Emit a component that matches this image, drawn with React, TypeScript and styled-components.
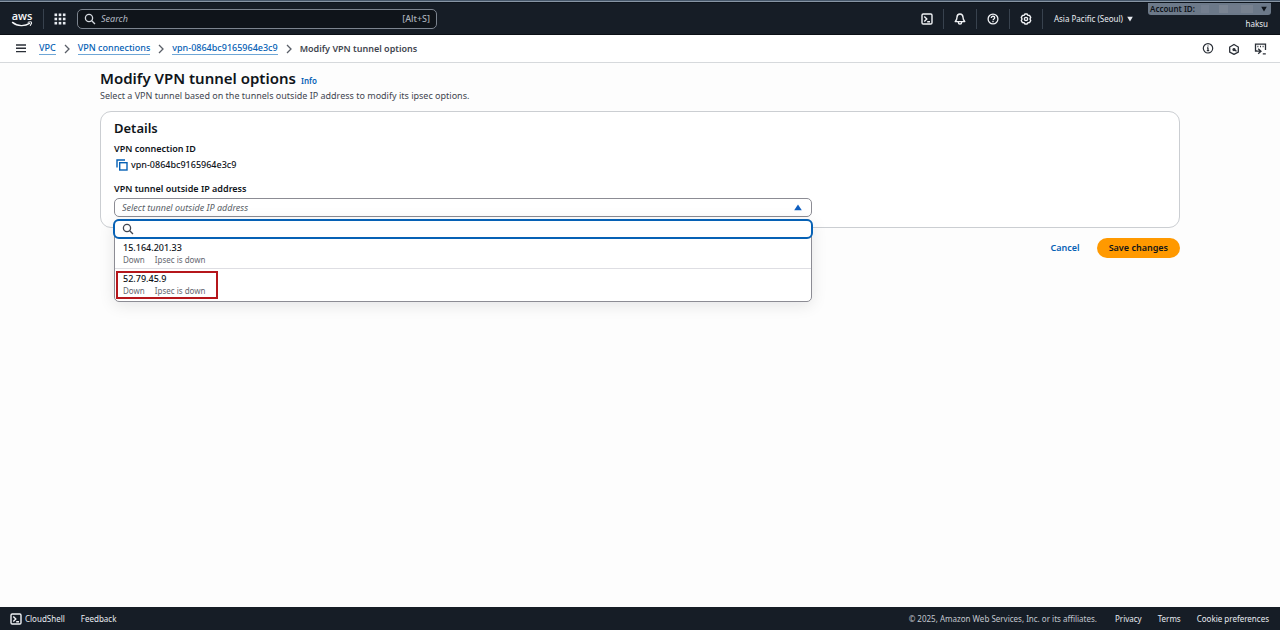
import React, { useState } from "react";
import styled, { createGlobalStyle } from "styled-components";

const GlobalStyle = createGlobalStyle`
  *, *::before, *::after { box-sizing: border-box; }
  body {
    margin: 0;
    background: #fdfdfd;
    color: #0f141a;
    font-family: "Noto Sans", "Open Sans", sans-serif;
    font-size: 9px;
    line-height: 12px;
  }
  button, input, select { font: inherit; color: inherit; }
  a { text-decoration: none; color: inherit; }
  svg { display: block; flex: none; }
`;

const Page = styled.div`
  min-height: 100vh;
  display: flex;
  flex-direction: column;
`;

/* Top navigation */
const TopBar = styled.header`
  display: flex;
  align-items: center;
  height: 35px;
  padding: 3px 9px 0 11px;
  background: #161d26;
  border-bottom: 1px solid #0b0f15;
  color: #e8ecf1;
  box-shadow: inset 0 1px #46576a, inset 0 2px #8795a4, inset 0 3px #0c131b;
`;

const Logo = styled.a`
  display: block;
  width: 22px;
  margin-right: 10px;
`;

const Separator = styled.span`
  width: 1px;
  height: 20px;
  background: #38424e;
`;

const IconButton = styled.button<{ $w: number }>`
  display: flex;
  align-items: center;
  justify-content: center;
  width: ${(p) => p.$w}px;
  height: 20px;
  padding: 0;
  border: 0;
  background: none;
`;

const ServicesButton = styled(IconButton)`
  padding-right: 2px;
`;

const GlobalSearch = styled.label`
  display: flex;
  align-items: center;
  gap: 5px;
  flex: 0 1 360px;
  height: 20px;
  padding: 0 6px;
  border: 1px solid #7c848f;
  border-radius: 5px;
  background: #0f141a;
  color: #c3c8cf;
`;

const SearchField = styled.input`
  flex: 1;
  min-width: 0;
  padding: 0;
  border: 0;
  outline: 0;
  background: none;
  &::placeholder { color: #b4bac3; font-style: italic; opacity: 1; }
`;

const Shortcut = styled.span`
  color: #a9afb8;
  font-weight: 500;
`;

const Tools = styled.div`
  display: flex;
  align-items: center;
  margin-left: auto;
`;

const RegionButton = styled.button`
  display: flex;
  align-items: center;
  gap: 4px;
  padding: 0 15px 0 11px;
  border: 0;
  background: none;
  font-size: 8px;
  white-space: nowrap;
`;

const Account = styled.div`
  display: flex;
  flex-direction: column;
  align-self: flex-start;
  align-items: flex-end;
  width: 123px;
  font-size: 8px;
`;

const AccountButton = styled.button`
  display: flex;
  align-items: center;
  width: 100%;
  height: 12px;
  padding: 0 4px 0 2px;
  border: 0;
  border-radius: 0 0 3px 3px;
  background: #6c7989;
  color: #0f141a;
  font-weight: 600;
  white-space: nowrap;
`;

const Redacted = styled.span`
  flex: 1;
  height: 8px;
  margin: 0 8px 0 6px;
  background: linear-gradient(90deg, #747f8f 0 16%, #6c7989 16% 34%, #7a8492 34% 52%, #707b8b 52% 76%, #788290 76%);
`;

const UserName = styled.span`
  padding: 3px 3px 0 0;
`;

/* Breadcrumb bar */
const CrumbBar = styled.nav`
  display: flex;
  align-items: center;
  height: 28px;
  padding: 0 7px 0 11px;
  border-bottom: 1px solid #d6d9dc;
  background: #fff;
`;

const Crumbs = styled.ol`
  display: flex;
  align-items: center;
  gap: 8px;
  margin: 0;
  padding: 0 0 0 8px;
  list-style: none;
`;

const Crumb = styled.li`
  display: flex;
  align-items: center;
  gap: 8px;
  color: #424650;
  font-weight: 600;
`;

const CrumbLink = styled.a`
  color: #0661b5;
  border-bottom: 1px solid #6fa6d6;
  font-weight: 500;
`;

/* Main content */
const Main = styled.main`
  flex: 1;
  padding: 4px 100px 24px;
`;

const TitleRow = styled.div`
  display: flex;
  align-items: baseline;
  gap: 5px;
`;

const Title = styled.h1`
  margin: 0;
  font-size: 15px;
  line-height: 22px;
  font-weight: 600;
`;

const InfoLink = styled.a`
  color: #0661b5;
  font-size: 8px;
  font-weight: 600;
`;

const Description = styled.p`
  margin: 1px 0 9px;
  color: #424650;
`;

const Card = styled.section`
  padding: 7px 13px 10px;
  border: 1px solid #cbced2;
  border-radius: 11px;
  background: #fff;
`;

const CardTitle = styled.h2`
  margin: 0 0 6px;
  font-size: 13px;
  line-height: 18px;
  font-weight: 600;
`;

const FieldLabel = styled.label`
  display: block;
  font-weight: 600;
`;

const ConnectionId = styled.output`
  display: flex;
  align-items: center;
  gap: 3px;
  height: 20px;
  margin-bottom: 8px;
  font-weight: 500;
`;

const CopyButton = styled.button`
  padding: 0 0 0 2px;
  border: 0;
  background: none;
`;

const FormGrid = styled.div`
  display: grid;
  grid-template-columns: 2fr 1fr;
  column-gap: 5px;
`;

const Picker = styled.div`
  position: relative;
  margin-top: 3px;
`;

const Trigger = styled.select`
  display: block;
  width: 100%;
  height: 19px;
  padding: 0 7px;
  appearance: none;
  border: 1px solid #8c8c94;
  border-radius: 5px;
  background: #fff;
  color: #5a5f68;
  font-style: italic;
`;

const Caret = styled.svg`
  position: absolute;
  top: 6px;
  right: 10px;
  pointer-events: none;
`;

const Panel = styled.div`
  position: absolute;
  top: 21px;
  left: 0;
  right: 0;
  border: 1px solid #8c8c94;
  border-radius: 5px;
  background: #fff;
  box-shadow: 0 3px 16px rgba(0, 7, 22, 0.1);
`;

const Filter = styled.label`
  display: flex;
  align-items: center;
  gap: 4px;
  height: 20px;
  margin: -1px -2px 0;
  padding: 0 7px;
  border: 2px solid #0661b5;
  border-radius: 6px;
  background: #fff;
`;

const Options = styled.ul`
  margin: 0;
  padding: 0;
  list-style: none;
`;

const Option = styled.li`
  display: flex;
  padding: 2px 1px;
  border-top: 1px solid #dedee3;
  cursor: pointer;
  &:first-child {
    border-top: 0;
    padding: 1px 1px 0;
  }
`;

const OptionBody = styled.div<{ $marked: boolean }>`
  padding: 0 11px 0 5px;
  border: 2px solid ${(p) => (p.$marked ? "#b5161b" : "transparent")};
`;

const Address = styled.div`
  font-weight: 500;
`;

const Status = styled.div`
  display: flex;
  gap: 10px;
  color: #656871;
  font-size: 8px;
`;

const Actions = styled.div`
  display: flex;
  justify-content: flex-end;
  gap: 5px;
  margin-top: 10px;
`;

const ActionButton = styled.button<{ $primary?: boolean }>`
  height: 20px;
  padding: 0 12px;
  border: 0;
  border-radius: 10px;
  background: ${(p) => (p.$primary ? "#ff9900" : "none")};
  color: ${(p) => (p.$primary ? "#0f141a" : "#0661b5")};
  font-weight: 600;
`;

/* Footer */
const Footer = styled.footer`
  display: flex;
  align-items: center;
  height: 23px;
  padding: 0 11px 0 10px;
  background: #161d26;
  color: #e8ecf1;
  font-size: 8px;
  white-space: nowrap;
`;

const FooterGroup = styled.div`
  display: flex;
  align-items: center;
  gap: 16px;
  & + & { margin-left: auto; }
`;

const FooterLink = styled.a`
  display: flex;
  align-items: center;
  gap: 3px;
`;

const Copyright = styled.span`
  color: #c3c8cf;
  margin-right: 2px;
`;

const SearchIcon = ({ color }: { color: string }) => (
  <svg width="12" height="12" viewBox="0 0 12 12" fill="none" stroke={color} strokeWidth="1.3">
    <circle cx="5" cy="5" r="3.6" />
    <path d="M7.7 7.7 11 11" />
  </svg>
);

const ShellIcon = () => (
  <svg width="12" height="12" viewBox="0 0 12 12" fill="none" stroke="#f0f2f5" strokeWidth="1.4">
    <rect x="1" y="1" width="10" height="10" rx="1.2" />
    <path d="M3.3 3.4 5.8 5.9 3.3 8.4M6.2 8.7h2.8" />
  </svg>
);

const DownTriangle = ({ color }: { color: string }) => (
  <svg width="6" height="6" viewBox="0 0 6 6" fill={color}>
    <path d="M.2.8h5.6L3 5.6z" />
  </svg>
);

const Chevron = () => (
  <svg width="6" height="10" viewBox="0 0 6 10" fill="none" stroke="#5a5f68" strokeWidth="1.3">
    <path d="M1 1 5 5 1 9" />
  </svg>
);

const tunnels = [
  { ip: "15.164.201.33", state: "Down", detail: "Ipsec is down" },
  { ip: "52.79.45.9", state: "Down", detail: "Ipsec is down" },
];

const crumbs = ["VPC", "VPN connections", "vpn-0864bc9165964e3c9"];

export default function App() {
  const [open, setOpen] = useState(true);
  const [selected, setSelected] = useState("");
  const [query, setQuery] = useState("");

  return (
    <Page>
      <GlobalStyle />
      <TopBar>
        <Logo href="#" aria-label="AWS home">
          <svg width="22" height="22" viewBox="0 0 22 22">
            <text x="11" y="12" textAnchor="middle" fill="#f4f6f8" fontFamily="Open Sans, sans-serif" fontWeight="600" fontSize="11">aws</text>
            <path d="M1.5 14.4C6.5 18.6 14 18.400 18.600 15.400" fill="none" stroke="#f4f6f8" strokeWidth="1.4" strokeLinecap="round" />
            <path d="M17.200 14.300c1.400-.5 2.900-.4 3.200-.1.3.4-.1 2-1.100 3.100" fill="none" stroke="#f4f6f8" strokeWidth="1.1" strokeLinecap="round" />
          </svg>
        </Logo>
        <Separator />
        <ServicesButton $w={33} aria-label="Services">
          <svg width="12" height="12" viewBox="0 0 12 12" fill="#e8ecf1">
            {[0.5, 4.7, 8.9].map((y) => [0.5, 4.7, 8.9].map((x) => <rect key={`${x}-${y}`} x={x} y={y} width="2.6" height="2.6" />))}
          </svg>
        </ServicesButton>
        <GlobalSearch>
          <SearchIcon color="#d5dae0" />
          <SearchField type="search" placeholder="Search" aria-label="Search" />
          <Shortcut>[Alt+S]</Shortcut>
        </GlobalSearch>
        <Tools>
          <IconButton $w={32} aria-label="CloudShell"><ShellIcon /></IconButton>
          <Separator />
          <IconButton $w={32} aria-label="Notifications">
            <svg width="12" height="12" viewBox="0 0 12 12" fill="none" stroke="#f0f2f5" strokeWidth="1.4" strokeLinejoin="round">
              <path d="M6 1C4 1 3 2.5 3 4.2 3 6.5 2.3 7.4 1.2 8.6h9.6C9.7 7.4 9 6.5 9 4.2 9 2.5 8 1 6 1z" />
              <path d="M4.4 9v.6c0 2 3.2 2 3.2 0V9" />
            </svg>
          </IconButton>
          <Separator />
          <IconButton $w={32} aria-label="Help">
            <svg width="12" height="12" viewBox="0 0 12 12" fill="none" stroke="#f0f2f5" strokeWidth="1.3">
              <circle cx="6" cy="6" r="4.9" />
              <path d="M4.3 5c0-2.4 3.4-2.2 3.4-.2C7.7 6 6 5.9 6 7.3M6 8v1.2" />
            </svg>
          </IconButton>
          <Separator />
          <IconButton $w={32} aria-label="Settings">
            <svg width="12" height="12" viewBox="0 0 12 12" fill="none" stroke="#f0f2f5" strokeWidth="1.4" strokeLinejoin="round">
              <path d="M4.8 1h2.4l.6 1.3 1.7.1 1.2 2L10 6l.7 1.6-1.2 2-1.7.1L7.2 11H4.8l-.6-1.3-1.7-.1-1.2-2L2 6l-.7-1.6 1.2-2 1.7-.1z" />
              <circle cx="6" cy="6" r="1.6" />
            </svg>
          </IconButton>
          <Separator />
          <RegionButton>Asia Pacific (Seoul) <DownTriangle color="#e8ecf1" /></RegionButton>
        </Tools>
        <Account>
          <AccountButton>
            Account ID:
            <Redacted />
            <DownTriangle color="#0f141a" />
          </AccountButton>
          <UserName>haksu</UserName>
        </Account>
      </TopBar>

      <CrumbBar aria-label="Breadcrumbs">
        <IconButton $w={20} aria-label="Open navigation">
          <svg width="10" height="10" viewBox="0 0 10 10" stroke="#2a2f37" strokeWidth="1.4">
            <path d="M0 1h10M0 4.3h10M0 7.6h10" />
          </svg>
        </IconButton>
        <Crumbs>
          {crumbs.map((c) => (
            <Crumb key={c}><CrumbLink href="#">{c}</CrumbLink><Chevron /></Crumb>
          ))}
          <Crumb aria-current="page">Modify VPN tunnel options</Crumb>
        </Crumbs>
        <Tools>
          <IconButton $w={26} aria-label="Info">
            <svg width="12" height="12" viewBox="0 0 12 12" fill="none" stroke="#2a2f37" strokeWidth="1.2">
              <circle cx="6" cy="5.3" r="4.7" />
              <path d="M6 2.4v1.2M6 4.6v3.2M5 4.9h1M4.8 7.7h2.4" />
            </svg>
          </IconButton>
          <IconButton $w={26} aria-label="Recent activity">
            <svg width="12" height="12" viewBox="0 0 12 12" fill="none" stroke="#2a2f37" strokeWidth="1.3">
              <path d="M6 1.5 10.3 4v5L6 11.4 1.7 9V4z" />
              <path d="M5.8 6.6 8.6 8.2" />
              <circle cx="6" cy="6.6" r="1" fill="#2a2f37" />
            </svg>
          </IconButton>
          <IconButton $w={26} aria-label="Feedback tools">
            <svg width="13" height="12" viewBox="0 0 13 12" fill="none" stroke="#2a2f37" strokeWidth="1.3">
              <path d="M3 8H1.500V1.200h10V7M3.400 3.500h1M6 3.500h1M8.600 3.500h1M4.200 5.800 7 8.200 4.200 10.800M2.500 8.200H7M8.800 10.800h3" />
            </svg>
          </IconButton>
        </Tools>
      </CrumbBar>

      <Main>
        <TitleRow>
          <Title>Modify VPN tunnel options</Title>
          <InfoLink href="#">Info</InfoLink>
        </TitleRow>
        <Description>Select a VPN tunnel based on the tunnels outside IP address to modify its ipsec options.</Description>

        <Card>
          <CardTitle>Details</CardTitle>
          <FieldLabel htmlFor="connection">VPN connection ID</FieldLabel>
          <ConnectionId id="connection">
            <CopyButton aria-label="Copy">
              <svg width="12" height="12" viewBox="0 0 12 12" fill="none" stroke="#0661b5" strokeWidth="1.4">
                <path d="M1 8.5V1h8" />
                <rect x="3.7" y="3.7" width="7.3" height="7.3" />
              </svg>
            </CopyButton>
            vpn-0864bc9165964e3c9
          </ConnectionId>
          <FormGrid>
            <div>
              <FieldLabel htmlFor="tunnel">VPN tunnel outside IP address</FieldLabel>
              <Picker>
                <Trigger
                  id="tunnel"
                  value={selected}
                  onChange={(e) => setSelected(e.target.value)}
                  onMouseDown={(e) => { e.preventDefault(); setOpen(!open); }}
                >
                  <option value="">Select tunnel outside IP address</option>
                  {tunnels.map((t) => <option key={t.ip}>{t.ip}</option>)}
                </Trigger>
                <Caret width="8" height="7" viewBox="0 0 8 7" fill="#0f5fc0"><path d="M4 .5 7.8 6.2H.2z" /></Caret>
                {open && (
                  <Panel>
                    <Filter>
                      <SearchIcon color="#424650" />
                      <SearchField type="text" aria-label="Filter tunnels" value={query} onChange={(e) => setQuery(e.target.value)} />
                    </Filter>
                    <Options role="listbox" aria-label="Tunnels">
                      {tunnels.filter((t) => t.ip.includes(query)).map((t) => (
                        <Option
                          key={t.ip}
                          role="option"
                          aria-selected={selected === t.ip}
                          onClick={() => { setSelected(t.ip); setOpen(false); }}
                        >
                          <OptionBody $marked={t.ip === "52.79.45.9"}>
                            <Address>{t.ip}</Address>
                            <Status><span>{t.state}</span><span>{t.detail}</span></Status>
                          </OptionBody>
                        </Option>
                      ))}
                    </Options>
                  </Panel>
                )}
              </Picker>
            </div>
          </FormGrid>
        </Card>

        <Actions>
          <ActionButton>Cancel</ActionButton>
          <ActionButton $primary>Save changes</ActionButton>
        </Actions>
      </Main>

      <Footer>
        <FooterGroup>
          <FooterLink href="#"><ShellIcon />CloudShell</FooterLink>
          <FooterLink href="#">Feedback</FooterLink>
        </FooterGroup>
        <FooterGroup>
          <Copyright>© 2025, Amazon Web Services, Inc. or its affiliates.</Copyright>
          <FooterLink href="#">Privacy</FooterLink>
          <FooterLink href="#">Terms</FooterLink>
          <FooterLink href="#">Cookie preferences</FooterLink>
        </FooterGroup>
      </Footer>
    </Page>
  );
}
